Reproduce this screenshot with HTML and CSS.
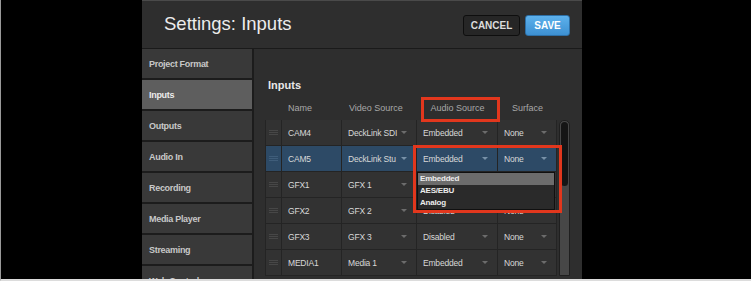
FILE: index.html
```html
<!DOCTYPE html>
<html lang="en">
<head>
  <meta charset="UTF-8">
  <title>Settings: Inputs</title>
  <link rel="stylesheet" href="styles.css">
</head>
<body>
  <div class="frame">
    <div class="dialog">
      <div class="dialog-header">
        <h1>Settings: Inputs</h1>
        <div class="actions">
          <button class="btn btn-cancel">CANCEL</button>
          <button class="btn btn-save">SAVE</button>
        </div>
      </div>

      <div class="dialog-body">
        <ul class="side-nav">
          <li>Project Format</li>
          <li class="active">Inputs</li>
          <li>Outputs</li>
          <li>Audio In</li>
          <li>Recording</li>
          <li>Media Player</li>
          <li>Streaming</li>
          <li>Web Control</li>
        </ul>

        <div class="panel">
          <h2>Inputs</h2>
          <div class="table-wrap">
            <div class="inputs-table">
              <div class="th"></div>
              <div class="th th-name">Name</div>
              <div class="th th-video">Video Source</div>
              <div class="th th-center">Audio Source</div>
              <div class="th th-center">Surface</div>

              <div class="row">
                <div class="cell handle"><span></span></div>
                <div class="cell">CAM4</div>
                <div class="cell select"><b>DeckLink SDI</b><i></i></div>
                <div class="cell select"><b>Embedded</b><i></i></div>
                <div class="cell select"><b>None</b><i></i></div>
              </div>
              <div class="row selected">
                <div class="cell handle"><span></span></div>
                <div class="cell">CAM5</div>
                <div class="cell select"><b>DeckLink Stu</b><i></i></div>
                <div class="cell select"><b>Embedded</b><i></i></div>
                <div class="cell select"><b>None</b><i></i></div>
              </div>
              <div class="row">
                <div class="cell handle"><span></span></div>
                <div class="cell">GFX1</div>
                <div class="cell select"><b>GFX 1</b><i></i></div>
                <div class="cell select"><b>Disabled</b><i></i></div>
                <div class="cell select"><b>None</b><i></i></div>
              </div>
              <div class="row">
                <div class="cell handle"><span></span></div>
                <div class="cell">GFX2</div>
                <div class="cell select"><b>GFX 2</b><i></i></div>
                <div class="cell select"><b>Disabled</b><i></i></div>
                <div class="cell select"><b>None</b><i></i></div>
              </div>
              <div class="row">
                <div class="cell handle"><span></span></div>
                <div class="cell">GFX3</div>
                <div class="cell select"><b>GFX 3</b><i></i></div>
                <div class="cell select"><b>Disabled</b><i></i></div>
                <div class="cell select"><b>None</b><i></i></div>
              </div>
              <div class="row">
                <div class="cell handle"><span></span></div>
                <div class="cell">MEDIA1</div>
                <div class="cell select"><b>Media 1</b><i></i></div>
                <div class="cell select"><b>Embedded</b><i></i></div>
                <div class="cell select"><b>None</b><i></i></div>
              </div>
            </div>
            <div class="scrollbar"><div class="thumb"></div></div>
          </div>
        </div>
      </div>

      <!-- open audio source menu + callouts -->
      <ul class="dropdown">
        <li class="hover">Embedded</li>
        <li>AES/EBU</li>
        <li>Analog</li>
      </ul>
      <div class="callout callout-head"></div>
      <div class="callout callout-menu"></div>
    </div>
  </div>
</body>
</html>
```

FILE: styles.css
```css
* {
  box-sizing: border-box;
  margin: 0;
  padding: 0;
}

body {
  font-family: 'Liberation Sans', Arial, sans-serif;
  background: #000;
  width: 751px;
  height: 281px;
  overflow: hidden;
}

.frame {
  height: 281px;
  border-left: 1px solid #9a9a9a;
  border-bottom: 2px solid #dcdcdc;
  padding-left: 141px;
  overflow: hidden;
}

.dialog {
  position: relative;
  width: 440px;
  height: 100%;
  background: #2c2c2c;
  border-top: 1px solid #4a4a4a;
  display: flex;
  flex-direction: column;
}

.dialog-header {
  height: 48px;
  flex-shrink: 0;
  display: flex;
  align-items: center;
  justify-content: space-between;
  padding: 0 12px 0 22px;
  background: #2e2e2e;
  border-bottom: 1px solid #1a1a1a;
}

.dialog-header h1 {
  font-size: 18.5px;
  font-weight: normal;
  color: #ececec;
  margin-top: -1px;
}

.actions {
  display: flex;
  gap: 5px;
  margin-top: 2px;
}

.btn {
  height: 21px;
  font-family: 'Liberation Sans', Arial, sans-serif;
  font-size: 10px;
  font-weight: bold;
  border-radius: 3px;
}

.btn-cancel {
  width: 57px;
  background: #262626;
  color: #dcdcdc;
  border: 1px solid #0e0e0e;
}

.btn-save {
  width: 45px;
  background: linear-gradient(#5db1ec, #3d90d2);
  color: #fff;
  border: 1px solid #2d6fa6;
}

.dialog-body {
  flex: 1;
  display: flex;
  min-height: 0;
}

.side-nav {
  list-style: none;
  width: 112px;
  flex-shrink: 0;
  background: #1c1c1c;
  border-right: 2px solid #1c1c1c;
}

.side-nav li {
  height: 29px;
  margin-bottom: 2px;
  display: flex;
  align-items: center;
  padding-left: 7px;
  background: #393939;
  color: #c8c8c8;
  font-size: 9px;
  font-weight: bold;
  letter-spacing: -0.3px;
}

.side-nav li.active {
  background: #5e5e5e;
  color: #ececec;
}

.panel {
  flex: 1;
  padding: 29px 0 0 11px;
  background: #2e2e2e;
}

.panel h2 {
  font-size: 11px;
  line-height: 14px;
  color: #e8e8e8;
  margin-left: 3px;
  margin-bottom: 4px;
}

.table-wrap {
  display: flex;
  gap: 2px;
}

.inputs-table {
  display: grid;
  grid-template-columns: 17px 60px 75px 81px 59px;
  font-size: 8.5px;
  letter-spacing: -0.2px;
  color: #d8d8d8;
}

.th {
  height: 24px;
  display: flex;
  align-items: center;
  font-size: 9px;
  letter-spacing: 0;
  color: #a8a8a8;
}

.th-name {
  padding-left: 6px;
}

.th-video {
  padding-left: 7px;
}

.th-center {
  justify-content: center;
}

.row {
  display: contents;
}

.cell {
  height: 26px;
  display: flex;
  align-items: center;
  padding-left: 6px;
  white-space: nowrap;
  overflow: hidden;
  background: #323232;
  border-right: 1px solid #242424;
  border-bottom: 1px solid #242424;
}

.row .cell:first-child {
  border-left: 1px solid #242424;
}

.row.selected .cell {
  background: #2d4a66;
}

.cell.handle {
  padding-left: 3px;
}

.handle span {
  width: 9px;
  height: 5px;
  border-top: 1px solid #474747;
  border-bottom: 1px solid #474747;
  position: relative;
}

.handle span::after {
  content: "";
  position: absolute;
  left: 0;
  right: 0;
  top: 1px;
  border-top: 1px solid #474747;
}

.row.selected .handle span,
.row.selected .handle span::after {
  border-color: #3f5d7a;
}

.select {
  gap: 2px;
  padding-right: 9px;
}

.select b {
  flex: 1;
  min-width: 0;
  overflow: hidden;
  font-weight: normal;
}

.select i {
  flex-shrink: 0;
  width: 0;
  height: 0;
  border-left: 3px solid transparent;
  border-right: 3px solid transparent;
  border-top: 3px solid #6c6c6c;
}

.row.selected .select i {
  border-top-color: #7891a8;
}

.scrollbar {
  width: 11px;
  margin-top: 24px;
  background: #474747;
  border: 1px solid #1f1f1f;
  border-radius: 5px 5px 0 0;
  padding: 1px;
}

.thumb {
  height: 64px;
  background: #151515;
  border-radius: 4px;
}

.dropdown {
  position: absolute;
  left: 275px;
  top: 171px;
  width: 138px;
  list-style: none;
  background: #2a2a2a;
  border: 1px solid #101010;
}

.dropdown li {
  height: 12px;
  line-height: 12px;
  padding-left: 2px;
  font-size: 8px;
  font-weight: bold;
  letter-spacing: -0.2px;
  color: #ececec;
}

.dropdown li.hover {
  background: #6c6c6c;
}

.callout {
  position: absolute;
  border: 3px solid #e2371d;
}

.callout-head {
  left: 279px;
  top: 96px;
  width: 79px;
  height: 25px;
}

.callout-menu {
  left: 271px;
  top: 144px;
  width: 149px;
  height: 68px;
}
```
